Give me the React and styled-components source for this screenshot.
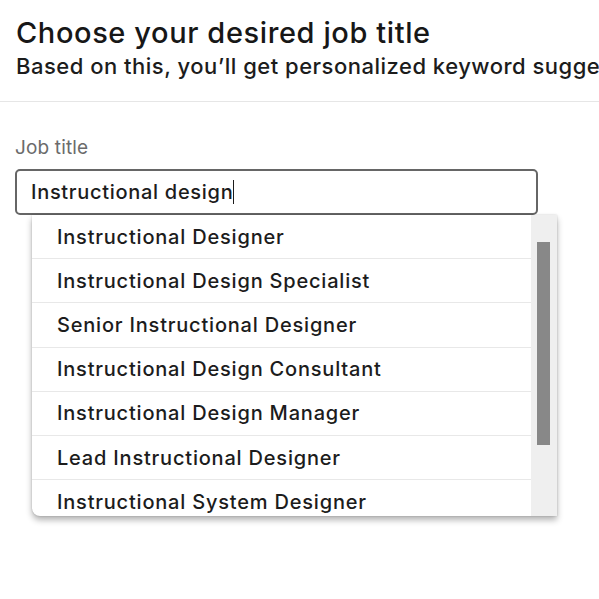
import React from "react";
import styled, { createGlobalStyle } from "styled-components";

const Global = createGlobalStyle`
  html, body { margin: 0; padding: 0; background: #fff; overflow: hidden; }
  body { font-family: "Inter", "Noto Sans", sans-serif; color: #1c1c1c; }
  * { box-sizing: border-box; }
`;

const Page = styled.div`
  width: 599px;
  height: 599px;
  overflow: hidden;
  background: #fff;
`;

const Header = styled.header`
  padding: 14px 16px 0 16px;
  height: 102px;
  border-bottom: 1px solid #e6e6e6;
  white-space: nowrap;
  overflow: hidden;
`;

const Title = styled.h1`
  margin: 0;
  font-size: 29px;
  font-weight: 500;
  line-height: 38px;
  color: #171717;
  letter-spacing: 0.6px;
`;

const Subtitle = styled.p`
  margin: 0;
  font-size: 22px;
  font-weight: 500;
  line-height: 28px;
  color: #1c1c1c;
  letter-spacing: 0.5px;
`;

const Form = styled.div`
  padding: 34px 61px 0 15px;
  display: flex;
  flex-direction: column;
  gap: 9px;
`;

const Label = styled.label`
  font-size: 19px;
  line-height: 24px;
  color: #6b6b6b;
  letter-spacing: 0.15px;
`;

const Field = styled.div`
  position: relative;
`;

const Input = styled.div`
  height: 46px;
  border: 2px solid #666;
  border-radius: 5px;
  padding: 0 14px;
  display: flex;
  align-items: center;
  font-size: 20px;
  font-weight: 500;
  color: #1c1c1c;
  letter-spacing: 0.7px;
`;

const Caret = styled.span`
  display: inline-block;
  width: 1px;
  height: 24px;
  background: #1c1c1c;
  margin-left: 0;
`;

const Dropdown = styled.div`
  position: absolute;
  top: 46px;
  left: 17px;
  width: 525px;
  height: 301px;
  display: flex;
  background: #fff;
  border-bottom-left-radius: 8px;
  box-shadow: 0 4px 6px rgba(0, 0, 0, 0.3), 0 0 2px rgba(0, 0, 0, 0.2);
  overflow: hidden;
`;

const List = styled.ul`
  flex: 1;
  margin: 0;
  padding: 0;
  list-style: none;
  overflow: hidden;
`;

const Item = styled.li`
  height: 44.2px;
  padding-left: 25px;
  display: flex;
  align-items: center;
  font-size: 20px;
  font-weight: 500;
  color: #1c1c1c;
  letter-spacing: 0.8px;
  border-bottom: 1px solid #e8e8e8;
  white-space: nowrap;
`;

const Track = styled.div`
  width: 26px;
  background: #efefef;
  padding: 27px 7px 0 6px;
`;

const Thumb = styled.div`
  height: 203px;
  background: #888;
`;

const items = [
  "Instructional Designer",
  "Instructional Design Specialist",
  "Senior Instructional Designer",
  "Instructional Design Consultant",
  "Instructional Design Manager",
  "Lead Instructional Designer",
  "Instructional System Designer",
];

export default function App() {
  return (
    <Page>
      <Global />
      <Header>
        <Title>Choose your desired job title</Title>
        <Subtitle>Based on this, you’ll get personalized keyword suggestions</Subtitle>
      </Header>
      <Form>
        <Label>Job title</Label>
        <Field>
          <Input>
            Instructional design
            <Caret />
          </Input>
          <Dropdown>
            <List>
              {items.map((t) => (
                <Item key={t}>{t}</Item>
              ))}
            </List>
            <Track>
              <Thumb />
            </Track>
          </Dropdown>
        </Field>
      </Form>
    </Page>
  );
}
